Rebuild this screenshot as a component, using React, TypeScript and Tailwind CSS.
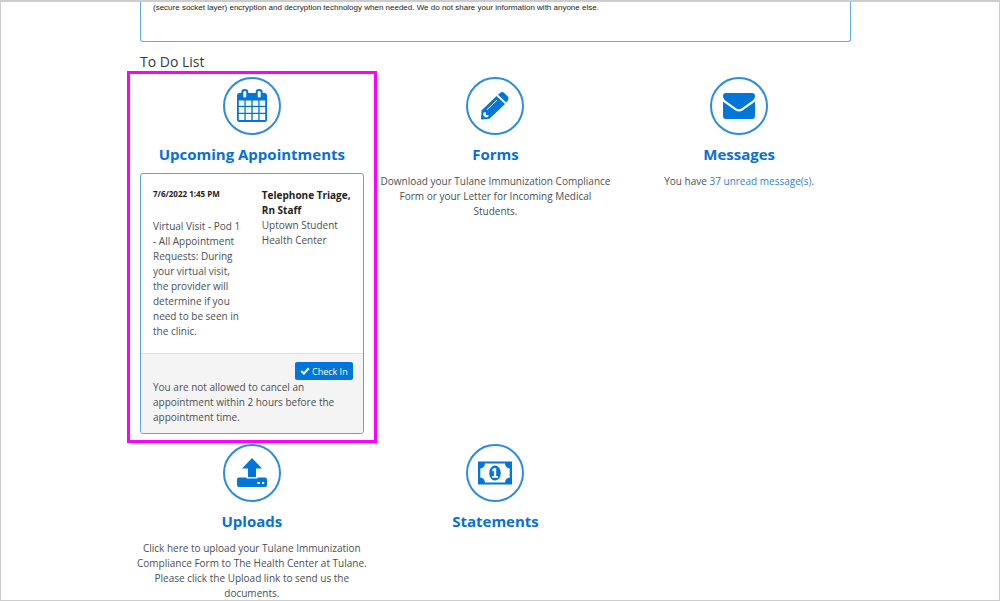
import type { ReactNode } from "react";

function CalendarIcon() {
  return (
    <svg viewBox="0 0 32 34" className="h-[34px] w-8" fill="none" aria-hidden="true">
      <path fill="#0275d8" d="M3.500 4H28.500Q31 4 31 6.500V30.500Q31 33 28.500 33H3.500Q1 33 1 30.500V6.500Q1 4 3.500 4Z" />
      <path fill="#fff" d="M2.800 11.500h5.600v5.300H2.800zM9.700 11.500h5.600v5.300H9.700zM16.700 11.500h5.600v5.300h-5.600zM23.600 11.500h5.600v5.300h-5.600zM2.800 18.100h5.600v5.600H2.800zM9.700 18.100h5.600v5.600H9.700zM16.700 18.100h5.600v5.600h-5.600zM23.600 18.100h5.600v5.600h-5.600zM2.800 25h5.600v6H2.800zM9.700 25h5.600v6H9.700zM16.700 25h5.600v6h-5.600zM23.600 25h5.600v6h-5.600z" />
      <rect x="6.300" y="1" width="5" height="8.500" rx="2.300" fill="#fff" stroke="#0275d8" strokeWidth="2" />
      <rect x="20.700" y="1" width="5" height="8.500" rx="2.300" fill="#fff" stroke="#0275d8" strokeWidth="2" />
    </svg>
  );
}

function PencilIcon() {
  return (
    <svg viewBox="0 0 30 30" className="size-[30px]" aria-hidden="true">
      <path fill="#0275d8" d="M16.500 5 25 13 9.500 27.800 1.500 28.500Q1 28.500 1 28L1.500 19.500Z" />
      <path fill="#0275d8" d="M18 3.700 20.500 1.600Q22.500.3 24 1.800L28 5.800Q29.300 7.200 28 9L26.200 11.600Z" />
      <path d="M7 18.700 17 9.200" stroke="#fff" strokeWidth="1" />
      <path fill="#fff" d="M3.500 21.500 6 21.200V24h2.500L8.200 26l-2.700.4L3.200 24.200Z" />
    </svg>
  );
}

function EnvelopeIcon() {
  return (
    <svg viewBox="0 0 32 26" className="h-[26px] w-8" aria-hidden="true">
      <path fill="#0275d8" d="M3 0H29Q32 0 32 3C32 5.500 30.500 7 29 8L18.500 15.500Q16 17 13.500 15.500L3 8C1.500 7 0 5.500 0 3Q0 0 3 0Z" />
      <path fill="#0275d8" d="M0 8.500Q1 9.500 12.500 17.400Q16 19.600 19.500 17.400Q31 9.500 32 8.500V23Q32 26 29 26H3Q0 26 0 23Z" />
    </svg>
  );
}

function UploadIcon() {
  return (
    <svg viewBox="0 0 30 30" className="size-[30px]" aria-hidden="true">
      <path fill="#0275d8" d="M15 0 25 10.500H19V19H11V10.500H5ZM2 19.500H9.500V20.500H20.500V19.500H28Q30 19.500 30 21.500V27Q30 29 28 29H2Q0 29 0 27V21.500Q0 19.500 2 19.500Z" />
      <path fill="#fff" d="M20.500 24h2.200v2h-2.200zM25 24h2.200v2H25z" />
    </svg>
  );
}

function MoneyIcon() {
  return (
    <svg viewBox="0 0 34 24" className="h-6 w-[34px]" aria-hidden="true">
      <path fill="#0275d8" d="M0 .5H34V23.500H0Z" />
      <path fill="#fff" d="M7 2.500H27Q27.500 7 31.700 7.500V16.500Q27.500 17 27 21.500H7Q6.500 17 2.300 16.500V7.500Q6.500 7 7 2.500Z" />
      <ellipse cx="17" cy="12" rx="5.800" ry="7.400" fill="#0275d8" />
      <path fill="#fff" d="M16 7h2.200v8H20v1.700h-6V15h1.900V9.700l-1.700.8V8.600Z" />
    </svg>
  );
}

function CheckIcon() {
  return (
    <svg viewBox="0 0 10 8" className="h-2 w-2.5" fill="none" aria-hidden="true">
      <path d="M1.200 4 3.900 6.500 8.800 1.300" stroke="#fff" strokeWidth="2" />
    </svg>
  );
}

function Tile({ icon, title, children }: { icon: ReactNode; title: string; children?: ReactNode }) {
  return (
    <section className="text-center">
      <div className="mx-auto flex size-[58px] items-center justify-center rounded-full border-2 border-[#2f8bdd]">
        {icon}
      </div>
      <h2 className="mt-[7px] text-[15px] leading-6 font-bold text-[#0a6fd3]">{title}</h2>
      {children}
    </section>
  );
}

function TileText({ children }: { children: ReactNode }) {
  return <p className="-mx-1 mt-2">{children}</p>;
}

export default function App() {
  return (
    <main className="h-screen overflow-hidden border border-t-2 border-[#cccccc] bg-white pr-[148px] pl-[139px] font-['Open_Sans','Noto_Sans',sans-serif] text-[10px] leading-[15px] text-[#4b4f52]">
      <div className="h-10 rounded-b-[3px] border-x border-b border-[#65aae8] px-3">
        <p className="font-['Liberation_Sans',Arial,sans-serif] text-[8px] leading-3 text-[#222222]">
          (secure socket layer) encryption and decryption technology when needed. We do not share your information with anyone else.
        </p>
      </div>
      <h1 className="mt-2.5 text-[14px] leading-5 text-[#373a3c]">To Do List</h1>

      <div className="mt-[5px] grid grid-cols-3 gap-x-5 gap-y-2.5">
        <div className="relative">
          <div className="pointer-events-none absolute -inset-x-[13px] -top-1.5 -bottom-[9px] border-3 border-[#ff00ff]" />
          <Tile icon={<CalendarIcon />} title="Upcoming Appointments">
            <article className="mt-[7px] overflow-hidden rounded-[3px] border border-[#5aa5e3] text-left">
              <div className="grid grid-cols-2 gap-x-5 px-3 py-3.5">
                <div>
                  <p className="text-[8px] leading-3 font-bold text-[#222222]">7/6/2022 1:45 PM</p>
                  <p className="mt-[19px]">
                    Virtual Visit - Pod 1 - All Appointment Requests: During your virtual visit, the provider will determine if you need to be seen in the clinic.
                  </p>
                </div>
                <div>
                  <p className="font-bold text-[#222222]">Telephone Triage, Rn Staff</p>
                  <p>Uptown Student Health Center</p>
                </div>
              </div>
              <footer className="border-t border-[#dddddd] bg-[#f4f4f4] px-3 py-2">
                <div className="-mr-0.5 flex justify-end">
                  <button type="button" className="flex h-[18px] items-center gap-0.5 rounded-[2px] bg-[#0275d8] px-[5px] text-[9px] text-white">
                    <CheckIcon />
                    Check In
                  </button>
                </div>
                <p>You are not allowed to cancel an appointment within 2 hours before the appointment time.</p>
              </footer>
            </article>
          </Tile>
        </div>
        <Tile icon={<PencilIcon />} title="Forms">
          <TileText>Download your Tulane Immunization Compliance Form or your Letter for Incoming Medical Students.</TileText>
        </Tile>
        <Tile icon={<EnvelopeIcon />} title="Messages">
          <TileText>
            You have{" "}
            <a href="#messages" className="text-[#2f83d3]">
              37 unread message(s)
            </a>
            .
          </TileText>
        </Tile>
        <Tile icon={<UploadIcon />} title="Uploads">
          <TileText>
            Click here to upload your Tulane Immunization Compliance Form to The Health Center at Tulane. Please click the Upload link to send us the documents.
          </TileText>
        </Tile>
        <Tile icon={<MoneyIcon />} title="Statements" />
      </div>
    </main>
  );
}
